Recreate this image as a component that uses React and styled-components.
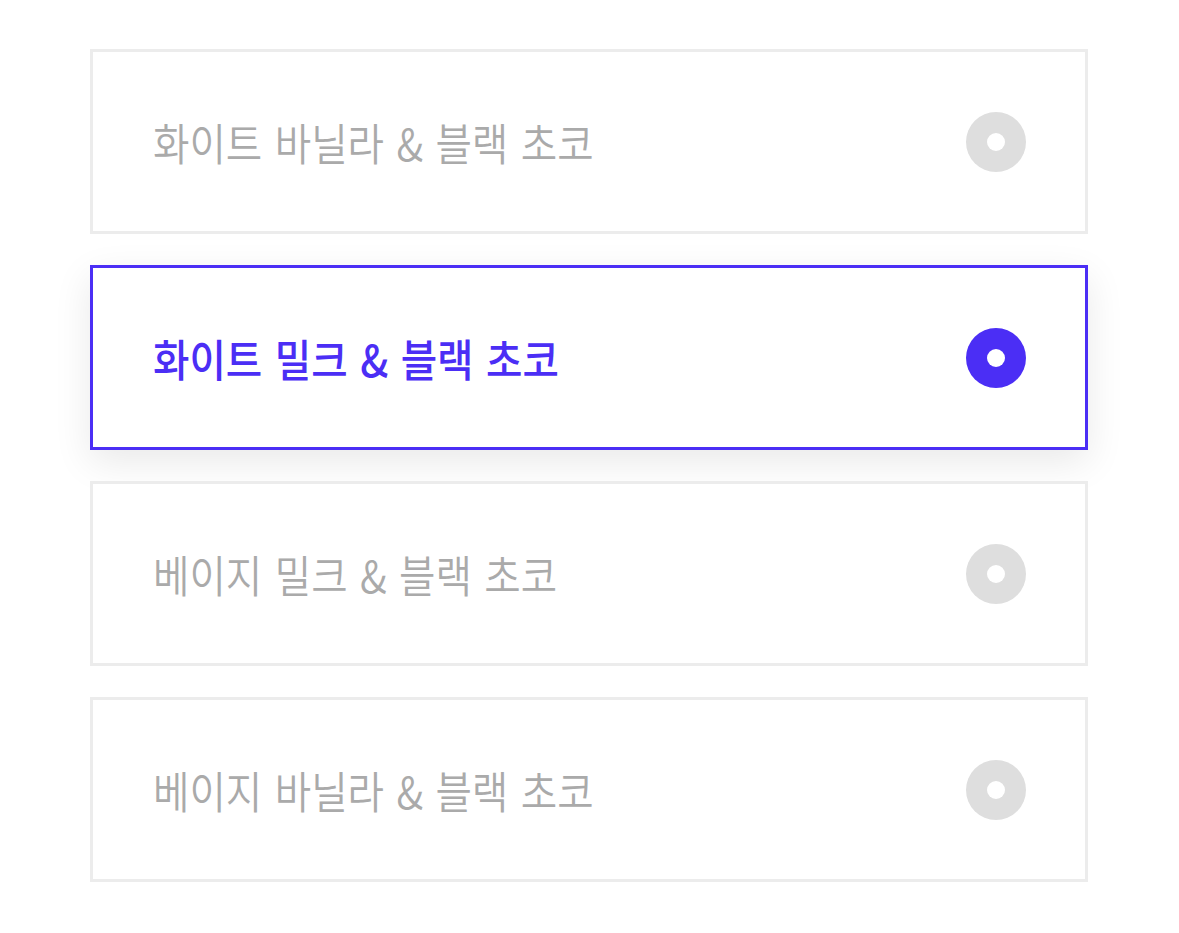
import React from "react";
import styled, { createGlobalStyle } from "styled-components";

const GlobalStyle = createGlobalStyle`
    body {
        margin: 0;
        background: #ffffff;
        font-family: "Noto Sans CJK KR", "Noto Sans", sans-serif;
    }
`;

const Page = styled.div`
    padding: 49px 0 0 90px;
`;

const List = styled.ul`
    list-style: none;
    margin: 0;
    padding: 0;
    width: 998px;
    display: flex;
    flex-direction: column;
    gap: 31px;
`;

const Option = styled.li`
    box-sizing: border-box;
    height: 185px;
    display: flex;
    align-items: center;
    justify-content: space-between;
    padding: 0 59px 0 60px;
    background: #fff;
    border: 3px solid ${(p) => (p.$active ? "#4b2ef5" : "#ececec")};
    box-shadow: ${(p) => (p.$active ? "0 12px 36px rgba(0, 0, 0, 0.09)" : "none")};
    cursor: pointer;
`;

const Label = styled.span`
    display: inline-block;
    font-size: 44px;
    line-height: 1;
    word-spacing: 4px;
    font-weight: ${(p) => (p.$active ? 500 : 350)};
    color: ${(p) => (p.$active ? "#4b2ef5" : "#aaaaaa")};
    transform: scaleX(0.9);
    transform-origin: left center;
    white-space: nowrap;
`;

const Radio = styled.span`
    box-sizing: border-box;
    width: 60px;
    height: 60px;
    border-radius: 50%;
    display: flex;
    align-items: center;
    justify-content: center;
    background: ${(p) => (p.$active ? "#4b2ef5" : "#dedede")};

    &::after {
        content: "";
        width: 18px;
        height: 18px;
        border-radius: 50%;
        background: #fff;
    }
`;

const options = [
    "화이트 바닐라 & 블랙 초코",
    "화이트 밀크 & 블랙 초코",
    "베이지 밀크 & 블랙 초코",
    "베이지 바닐라 & 블랙 초코",
];

const App = () => {
    const selected = 1;

    return (
        <Page>
            <GlobalStyle />
            <List>
                {options.map((name, i) => (
                    <Option key={name} $active={i === selected}>
                        <Label $active={i === selected}>{name}</Label>
                        <Radio $active={i === selected} />
                    </Option>
                ))}
            </List>
        </Page>
    );
};

export default App;
